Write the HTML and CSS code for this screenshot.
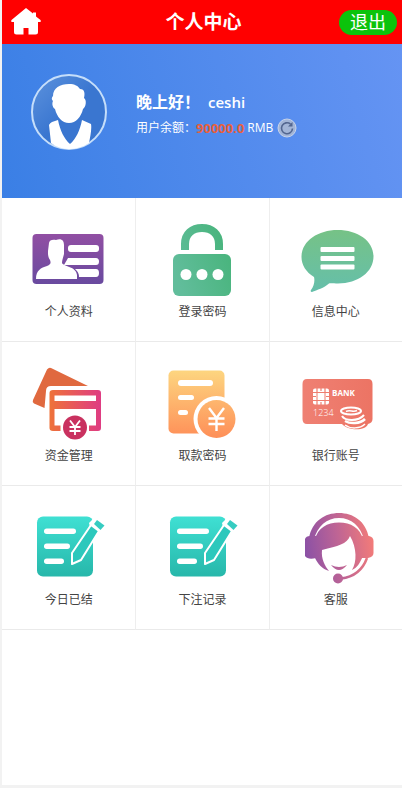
FILE: index.html
```html
<!DOCTYPE html>
<html lang="zh-CN">
<head>
  <meta charset="UTF-8">
  <meta name="viewport" content="width=device-width, initial-scale=1.0">
  <title>个人中心</title>
  <link rel="stylesheet" href="styles.css">
</head>
<body>
  <div class="page">
    <header class="topbar">
      <a class="home" href="#" aria-label="首页">
        <svg width="32" height="28" viewBox="0 0 32 28">
          <path fill="#fff" d="M16 0 L23 5.500 V4.500 H26 V8.500 L30.500 12 Q31.500 14 29.500 14 H28 V24 Q28 26.500 25.500 26.500 H18.500 V20 H13.500 V26.500 H6.500 Q4 26.500 4 24 V14 H2.500 Q0.500 14 1.500 12 Z"/>
        </svg>
      </a>
      <h1>个人中心</h1>
      <button class="logout" type="button">退出</button>
    </header>

    <section class="banner">
      <svg class="avatar" width="76" height="76" viewBox="0 0 76 76">
        <defs>
          <linearGradient id="av" x1="0" y1="0" x2="0.5" y2="0.5">
            <stop offset="0" stop-color="#5d93de"/>
            <stop offset="1" stop-color="#3a76d0"/>
          </linearGradient>
        </defs>
        <circle cx="38" cy="38" r="37" fill="url(#av)" stroke="#c5defa" stroke-width="2"/>
        <path fill="#fff" d="M22 22 C22 14 29 10 38 10 C44 10 47 12 49 15 C54 15 54 20 53 24 C56 26 55 33 52 35 C50 43 45 49 38 49 C31 49 26 43 24 35 C21 33 21 29 22 27 C20 25 21 23 22 22 Z"/>
        <path fill="#fff" d="M27 46 C29 56 33 65 39 70 C45 65 49 56 51 46 L60 50 C61 55 59 64 58 69 C46 77 30 77 20 69 L18 51 Q19 49 21 48 Z"/>
      </svg>
      <div class="user">
        <p class="greeting">晚上好！<span class="name">ceshi</span></p>
        <div class="balance">
          <span>用户余额：</span><strong>90000.0</strong><span class="unit">RMB</span>
          <button class="refresh" type="button" aria-label="刷新">
            <svg width="20" height="20" viewBox="0 0 20 20">
              <circle cx="10" cy="10" r="9" fill="#a3b5d6" stroke="#c7d3ea" stroke-width="1"/>
              <path d="M13.500 6 A5.500 5.500 0 1 0 15.500 10.500" fill="none" stroke="#53668f" stroke-width="1.600"/>
              <path d="M15.500 4 V8.500 H11 Z" fill="#53668f"/>
            </svg>
          </button>
        </div>
      </div>
    </section>

    <nav class="menu">
      <a href="#">
        <svg viewBox="0 0 80 80">
          <defs>
            <linearGradient id="g1" x1="0" y1="0" x2="0" y2="1">
              <stop offset="0" stop-color="#914fa3"/>
              <stop offset="1" stop-color="#694a9f"/>
            </linearGradient>
          </defs>
          <rect x="3.500" y="14" width="71" height="50" rx="4" fill="url(#g1)"/>
          <g fill="#fff">
            <path d="M7 59 C7 50 12 48 18 46 C22 44 22 43 21 40 C19 37 19 35 19 31 L20 23 C20 20 24 19 27 20 C32 18 35 20 35 25 V34 C34 38 33 40 33 43 C35 47 47 46 48 55 V59 Z"/>
            <rect x="39" y="25" width="31" height="7" rx="3"/>
            <path d="M39 38 H67 Q70 38 70 41.500 Q70 45 67 45 H35 Z"/>
            <path d="M46 49 H67 Q70 49 70 53 Q70 57 67 57 H50 Q50 52 46 49 Z"/>
          </g>
        </svg>
        <span>个人资料</span>
      </a>
      <a href="#">
        <svg viewBox="0 0 80 80">
          <defs>
            <linearGradient id="g2" gradientUnits="userSpaceOnUse" x1="12" y1="50" x2="69" y2="30">
              <stop offset="0" stop-color="#61bd9b"/>
              <stop offset="1" stop-color="#48b47c"/>
            </linearGradient>
          </defs>
          <path d="M23 30 V24 C23 14 30 8 40 8 C50 8 57 14 57 24 V30" fill="none" stroke="url(#g2)" stroke-width="8"/>
          <rect x="11" y="34" width="58" height="42" rx="6" fill="url(#g2)"/>
          <g fill="#fff">
            <circle cx="24" cy="54.500" r="5.500"/>
            <circle cx="40" cy="54.500" r="5.500"/>
            <circle cx="56" cy="54.500" r="5.500"/>
          </g>
        </svg>
        <span>登录密码</span>
      </a>
      <a href="#">
        <svg viewBox="0 0 80 80">
          <defs>
            <linearGradient id="g3" x1="0" y1="0" x2="0" y2="1">
              <stop offset="0" stop-color="#76c286"/>
              <stop offset="1" stop-color="#65bfab"/>
            </linearGradient>
          </defs>
          <path fill="url(#g3)" d="M41.500 10 C62 10 77.500 21 77.500 36.500 C77.500 52 62 63.500 42 63.500 C38 63.500 34 63 33 63.500 C28 68 21 70 16 72 Q14 72 15 70 C18 66 19 61 18 57 C10 52 5.500 45 5.500 37 C5.500 21 22 10 41.500 10 Z"/>
          <g fill="#fff">
            <rect x="24.500" y="27" width="34" height="5" rx="1"/>
            <rect x="24.500" y="36" width="34" height="5" rx="1"/>
            <rect x="24.500" y="44.500" width="34" height="5" rx="1"/>
          </g>
        </svg>
        <span>信息中心</span>
      </a>

      <a href="#">
        <svg viewBox="0 0 80 80">
          <defs>
            <linearGradient id="g4" x1="0" y1="0" x2="1" y2="0">
              <stop offset="0" stop-color="#ee7239"/>
              <stop offset="1" stop-color="#df3c83"/>
            </linearGradient>
          </defs>
          <path fill="#e0693f" d="M22 4 L59 22 H22 Q17 22 17 27 L15.500 44 L5 39.500 Q3 38 4 36 L18 5.500 Q20 3 22 4 Z"/>
          <path fill="url(#g4)" fill-rule="evenodd" d="M24 26 H69 Q72 26 72 29 V64 Q72 67 69 67 H60 V61.500 H67 V45 H25.500 V61.500 H31.500 V67 H24 Q20.500 67 20.500 64 V29 Q20.500 26 24 26 Z M25.500 31.500 V37 H67 V31.500 Z"/>
          <circle cx="46" cy="63.500" r="14" fill="#fff"/>
          <circle cx="46" cy="63.500" r="12" fill="#c9315f"/>
          <path d="M41 56.500 L46 63 L51 56.500 M46 63 V71 M40.500 63 H51.500 M40.500 67 H51.500" fill="none" stroke="#fff" stroke-width="1.800"/>
        </svg>
        <span>资金管理</span>
      </a>
      <a href="#">
        <svg viewBox="0 0 80 80">
          <defs>
            <linearGradient id="g5" gradientUnits="userSpaceOnUse" x1="0" y1="6" x2="0" y2="72">
              <stop offset="0" stop-color="#fdd680"/>
              <stop offset="1" stop-color="#fe9159"/>
            </linearGradient>
          </defs>
          <rect x="6.500" y="6.500" width="56" height="63" rx="5" fill="url(#g5)"/>
          <g fill="#fff">
            <rect x="16" y="16" width="35" height="6" rx="3"/>
            <rect x="16" y="31" width="16" height="5" rx="2.500"/>
            <rect x="16" y="46" width="10" height="5" rx="2.500"/>
            <circle cx="54.500" cy="55" r="23"/>
          </g>
          <circle cx="54.500" cy="55" r="19" fill="url(#g5)"/>
          <path d="M47 44 L54.500 54 L62 44 M54.500 54 V67 M46.500 54.500 H62.500 M46.500 60 H62.500" fill="none" stroke="#fff" stroke-width="2.400"/>
        </svg>
        <span>取款密码</span>
      </a>
      <a href="#">
        <svg viewBox="0 0 80 80">
          <defs>
            <linearGradient id="g6" x1="0" y1="0" x2="1" y2="0">
              <stop offset="0" stop-color="#ef8073"/>
              <stop offset="1" stop-color="#ec7464"/>
            </linearGradient>
          </defs>
          <path fill="url(#g6)" d="M11 15 H72 Q76.500 15 76.500 20 V55 Q76.500 59 72 60 C70 67 52 67 46 60 H11 Q6.500 60 6.500 55 V20 Q6.500 15 11 15 Z"/>
          <rect x="17" y="24.500" width="16" height="16" rx="2" fill="#fff"/>
          <path d="M21 24 V29 M21 36 V41 M25 24 V27 M25 38 V41 M29 24 V29 M29 36 V41 M17 28.500 H21 M29 28.500 H33 M17 32.500 H20 M30 32.500 H33 M17 36.500 H21 M29 36.500 H33" fill="none" stroke="#ee7d6f" stroke-width="1.200"/>
          <rect x="21" y="28.500" width="8" height="8" fill="none" stroke="#ee7d6f"/>
          <text class="card-name" x="36" y="32">BANK</text>
          <text class="card-no" x="17" y="52">1234</text>
          <g fill="none" stroke="#fff" stroke-width="2">
            <ellipse cx="55" cy="47" rx="10" ry="3.500"/>
            <path d="M50 47.500 C54 45.500 57 48.500 61 46.500" stroke-width="1.500"/>
            <path d="M46 52 C49 57 62 58 68 51"/>
            <path d="M49 57 C54 60 64 60 69 55" stroke-width="2.500"/>
            <path d="M49 61 C54 65 64 65 69 60" stroke-width="1.500"/>
          </g>
        </svg>
        <span>银行账号</span>
      </a>

      <a href="#">
        <svg viewBox="0 0 80 80">
          <defs>
            <linearGradient id="g7" x1="0" y1="0" x2="0" y2="1">
              <stop offset="0" stop-color="#3fe0d3"/>
              <stop offset="1" stop-color="#27b7aa"/>
            </linearGradient>
            <g id="note">
              <rect x="8" y="8.500" width="56" height="60" rx="6" fill="url(#g7)"/>
              <g fill="#fff">
                <rect x="15" y="20.500" width="32" height="5.500" rx="2.700"/>
                <rect x="15" y="35.500" width="26" height="5.500" rx="2.700"/>
                <rect x="15" y="50.500" width="20" height="5.500" rx="2.700"/>
                <path d="M60 15 L67 8 L78 16 L72 26 L64 32 Z"/>
              </g>
              <path d="M43 56 V45 L62 17 L70 23 L52 52 Z" fill="#2cc8bc" stroke="#fff" stroke-width="2" stroke-linejoin="round"/>
              <path d="M65 16 L68 12 L75.500 17.500 L71.500 22 Z" fill="#36ccc1"/>
            </g>
          </defs>
          <use href="#note"/>
        </svg>
        <span>今日已结</span>
      </a>
      <a href="#">
        <svg viewBox="0 0 80 80"><use href="#note"/></svg>
        <span>下注记录</span>
      </a>
      <a href="#">
        <svg viewBox="0 0 80 80">
          <defs>
            <linearGradient id="g9" gradientUnits="userSpaceOnUse" x1="8" y1="45" x2="77" y2="35">
              <stop offset="0" stop-color="#8950a6"/>
              <stop offset="0.5" stop-color="#bd6495"/>
              <stop offset="1" stop-color="#f27b79"/>
            </linearGradient>
          </defs>
          <g fill="url(#g9)">
            <path d="M13 30 C16 13 29 5 43 5 C57 5 70 13 73 30 L68 32 C65 18 55 10 43 10 C31 10 21 18 18 32 Z"/>
            <path d="M20 28 V50 Q12 52 9 48 V31 Q10 28 14 28 Z"/>
            <path d="M66 28 H73 Q77.500 29 77.500 33 V45 Q77.500 49 72 50 H66 Z"/>
            <path d="M19 50 V31 C22 20 31 14.500 43 14.500 C55 14.500 64 20 67 31 V48 C64 55 61 60 56 62 C61 54 61 40 54 28 C51 36 42 38 26 42 C25 51 29 58 33 63 C26 61 22 56 19 50 Z"/>
            <path d="M35 57 Q43 61 51 57 Q43 67 35 57 Z"/>
            <circle cx="42" cy="70.500" r="5"/>
          </g>
          <path d="M71 50 C67 61 58 69 45 70.500" fill="none" stroke="url(#g9)" stroke-width="2.500"/>
        </svg>
        <span>客服</span>
      </a>
    </nav>
  </div>
</body>
</html>
```

FILE: styles.css
```css
* {
  box-sizing: border-box;
}

body {
  margin: 0;
  background: #f2f2f2;
  font-family: "Open Sans", "Noto Sans CJK SC", sans-serif;
  font-size: 12px;
  color: #444;
}

.page {
  display: flex;
  flex-direction: column;
  min-height: calc(100vh - 3px);
  margin: 0 0 3px 2px;
  background: #fff;
}

a {
  color: inherit;
  text-decoration: none;
}

button {
  border: 0;
  padding: 0;
  font-family: inherit;
  cursor: pointer;
}

.topbar {
  display: grid;
  grid-template-columns: 1fr auto 1fr;
  align-items: center;
  height: 44px;
  padding: 0 5px 0 8px;
  background: #f00;
  color: #fff;
}

.home {
  display: flex;
}

.topbar h1 {
  margin: 0;
  font-size: 19px;
  line-height: 28px;
}

.logout {
  justify-self: end;
  width: 58px;
  height: 25px;
  border-radius: 13px;
  background: #0bc30b;
  color: #fff;
  font-size: 18px;
  line-height: 24px;
}

.banner {
  display: flex;
  align-items: center;
  gap: 29px;
  height: 154px;
  padding: 0 29px 18px;
  background: linear-gradient(75deg, #3a7fe5, #6594f3);
  color: #fff;
}

.avatar {
  flex: none;
}

.user {
  padding-top: 4px;
}

.greeting {
  margin: 0 0 4px;
  font-size: 16px;
  font-weight: bold;
  line-height: 24px;
}

.name {
  margin-left: 8px;
  font-size: 15px;
  font-weight: 600;
}

.balance {
  display: flex;
  align-items: center;
  line-height: 20px;
}

.balance strong {
  color: #e8603c;
  font-size: 13px;
}

.unit {
  margin: 0 4px 0 3px;
}

.refresh {
  display: flex;
  border-radius: 50%;
  background: none;
}

.menu {
  display: grid;
  grid-template-columns: repeat(3, 1fr);
}

.menu a {
  display: flex;
  flex-direction: column;
  align-items: center;
  gap: 2px;
  padding: 22px 0 19px;
  border-left: 1px solid #eee;
  border-bottom: 1px solid #eaeaea;
  line-height: 20px;
}

.menu a:nth-child(3n + 1) {
  border-left: 0;
}

.menu svg {
  width: 80px;
  height: 80px;
}

.card-name {
  fill: #fff;
  font-size: 8px;
  font-weight: bold;
}

.card-no {
  fill: #fff;
  font-size: 9px;
  font-weight: 300;
}
```
